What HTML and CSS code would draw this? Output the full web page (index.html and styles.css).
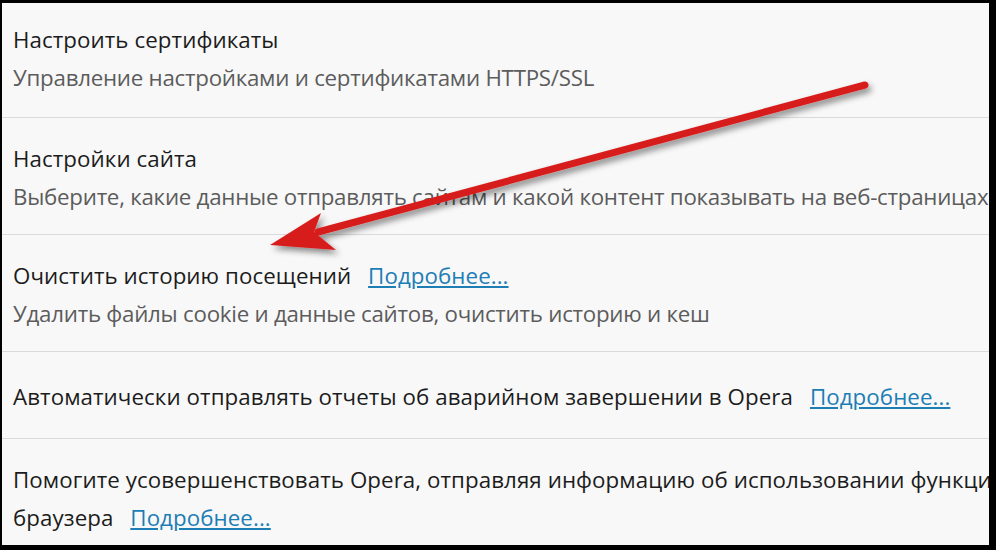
FILE: index.html
```html
<!DOCTYPE html>
<html lang="ru">
<head>
    <meta charset="UTF-8">
    <title>Настройки | Конфиденциальность</title>
    <link rel="stylesheet" href="styles.css">
</head>
<body>
    <div class="frame">
        <div class="row first">
            <div class="title">Настроить сертификаты</div>
            <div class="sub">Управление настройками и сертификатами HTTPS/SSL</div>
        </div>
        <div class="row">
            <div class="title">Настройки сайта</div>
            <div class="sub">Выберите, какие данные отправлять сайтам и какой контент показывать на веб-страницах</div>
        </div>
        <div class="row">
            <div class="title">Очистить историю посещений <a href="#">Подробнее...</a></div>
            <div class="sub">Удалить файлы cookie и данные сайтов, очистить историю и кеш</div>
        </div>
        <div class="row single">
            <div class="title">Автоматически отправлять отчеты об аварийном завершении в Opera <a href="#">Подробнее...</a></div>
        </div>
        <div class="row last">
            <div class="title">Помогите усовершенствовать Opera, отправляя информацию об использовании функций браузера</div>
            <div class="title">браузера <a href="#">Подробнее...</a></div>
        </div>

        <!-- стрелка поверх списка -->
        <svg class="arrow" width="996" height="550" viewBox="0 0 996 550">
            <defs>
                <filter id="shadow" x="-10%" y="-20%" width="130%" height="160%">
                    <feDropShadow dx="3" dy="4" stdDeviation="3" flood-color="#000" flood-opacity="0.45"/>
                </filter>
            </defs>
            <g filter="url(#shadow)">
                <line x1="865" y1="85" x2="318" y2="232" stroke="#d71f1f" stroke-width="7" stroke-linecap="round"/>
                <polygon points="270,245 321,213 314,232 336,250" fill="#d71f1f"/>
            </g>
        </svg>
    </div>
</body>
</html>
```

FILE: styles.css
```css
body {
    margin: 0;
    padding: 0;
    background-color: #000;
    overflow: hidden;
}

.frame {
    position: relative;
    margin: 3px 0 0 2px;
    width: 987px;
    height: 542px;
    overflow: hidden;
    background-color: #f8f8f8;
    font-family: 'Open Sans', sans-serif;
    font-size: 22.3px;
    line-height: 38px;
}

.row {
    padding: 22px 11px 18px;
    border-bottom: 1px solid #dadada;
    white-space: nowrap;
}

.row.first {
    padding: 18px 11px 20px;
}

.row.single {
    padding: 26px 11px 22px;
}

.row.last {
    border-bottom: none;
}

.title {
    color: #1c1c1c;
    letter-spacing: 0.08px;
}

.sub {
    color: #5c5c5c;
    letter-spacing: -0.25px;
}

.title a {
    color: #1d7db5;
    text-decoration: underline;
    margin-left: 11px;
}

.arrow {
    position: absolute;
    left: -2px;
    top: -3px;
    pointer-events: none;
}
```
